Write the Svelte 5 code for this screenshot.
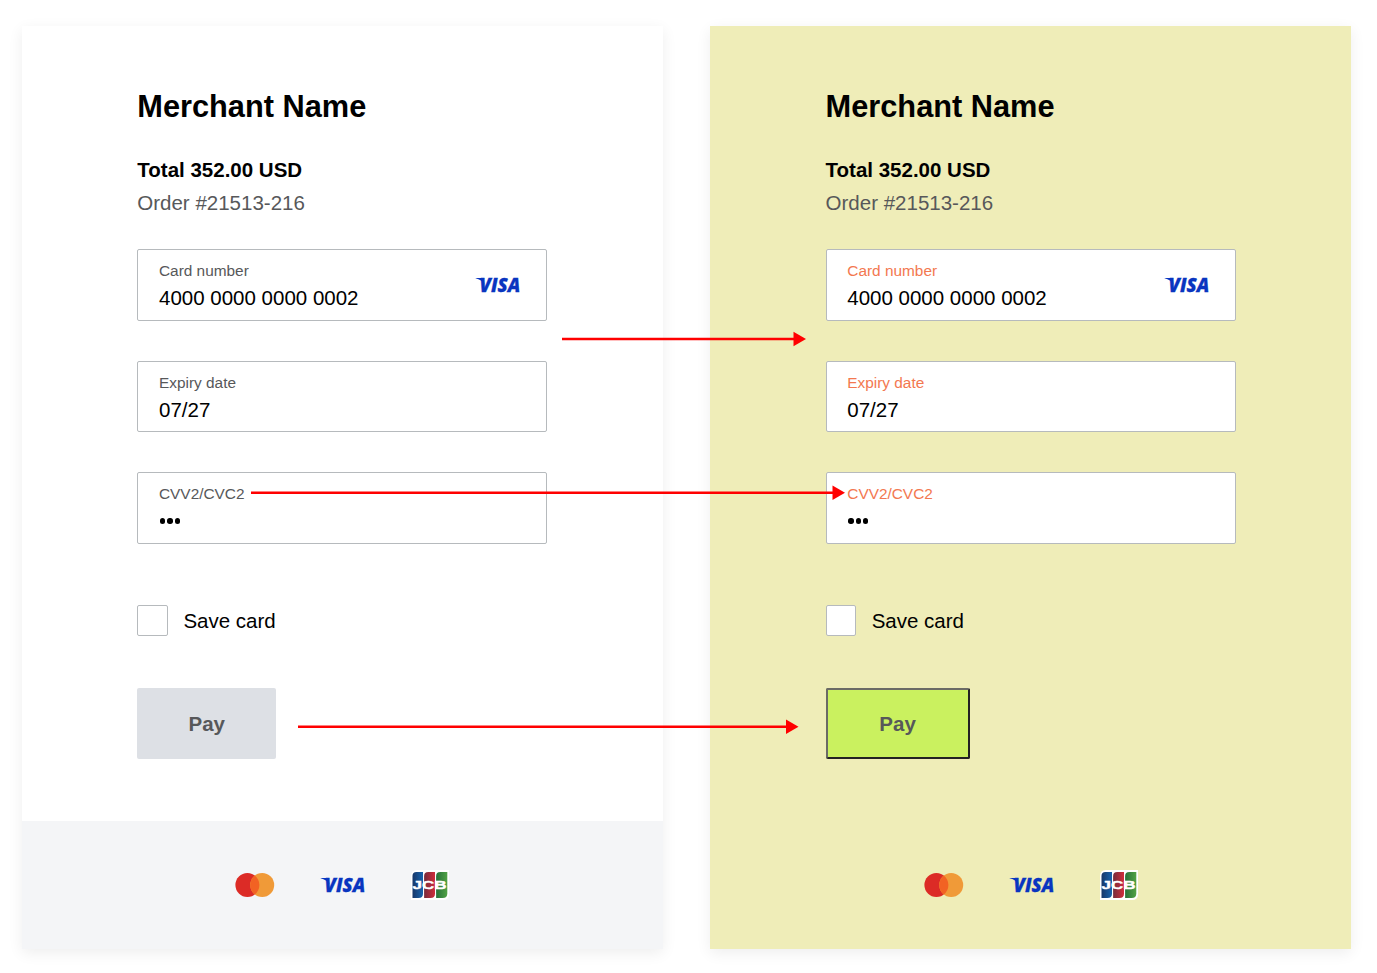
<script>
  const panels = [
    { id: 'standard', themed: false },
    { id: 'custom', themed: true }
  ];
  const fields = [
    { label: 'Card number', value: '4000 0000 0000 0002', brand: true },
    { label: 'Expiry date', value: '07/27' },
    { label: 'CVV2/CVC2', secret: true }
  ];
  const arrows = [
    { x1: 562, x2: 806, y: 339 },
    { x1: 251, x2: 845, y: 492.8 },
    { x1: 298, x2: 798.5, y: 726.8 }
  ];
</script>

{#snippet visa()}
  <svg class="visa" width="46" height="18" viewBox="0 0 46 18" aria-label="Visa">
    <path d="M0.6 1.9H6.4Q8.2 1.9 8.6 3.5L9.4 8Q6.8 3.8 0.6 2.3Z" fill="#0935c0" />
    <text x="4.6" y="16" textLength="40.6" lengthAdjust="spacingAndGlyphs">VISA</text>
  </svg>
{/snippet}

<main>
  {#each panels as panel (panel.id)}
    <section class="panel" class:themed={panel.themed}>
      <div class="content">
        <h1>Merchant Name</h1>
        <p class="total">Total 352.00 USD</p>
        <p class="order">Order #21513-216</p>
        <div class="fields">
          {#each fields as field}
            <div class="field">
              <div>
                <div class="label">{field.label}</div>
                {#if field.secret}
                  <div class="dots"><i></i><i></i><i></i></div>
                {:else}
                  <div class="value">{field.value}</div>
                {/if}
              </div>
              {#if field.brand}{@render visa()}{/if}
            </div>
          {/each}
        </div>
        <div class="save"><span class="box"></span><span>Save card</span></div>
        <button>Pay</button>
      </div>
      <footer>
        <svg width="40" height="26" viewBox="0 0 40 26" aria-label="Mastercard">
          <circle cx="12.4" cy="13" r="12" fill="#dc2b26" />
          <circle cx="27.2" cy="13" r="12" fill="#f09a38" />
          <path d="M19.8 3.55a12 12 0 0 1 0 18.9a12 12 0 0 1 0-18.9Z" fill="#f26223" />
        </svg>
        {@render visa()}
        <svg class="jcb" width="38" height="30" viewBox="0 0 38 30" aria-label="JCB">
          <defs>
            <linearGradient id="blue-{panel.id}"><stop stop-color="#173769" /><stop offset="1" stop-color="#1763ad" /></linearGradient>
            <linearGradient id="red-{panel.id}"><stop stop-color="#752c3c" /><stop offset="1" stop-color="#d12d3b" /></linearGradient>
            <linearGradient id="green-{panel.id}"><stop stop-color="#28713a" /><stop offset="1" stop-color="#51a345" /></linearGradient>
          </defs>
          <path d="M6 0H38V24Q38 30 32 30H0V6Q0 0 6 0Z" fill="#fff" />
          <path d="M5.5 2H12V23.5Q12 28 7.5 28H1.5V6Q1.5 2 5.5 2Z" fill="url(#blue-{panel.id})" />
          <path d="M17.3 2H24V23.5Q24 28 19.5 28H13.1V6Q13.1 2 17.3 2Z" fill="url(#red-{panel.id})" />
          <path d="M29.3 2H36.3V23.5Q36.3 28 31.7 28H25.1V6Q25.1 2 29.3 2Z" fill="url(#green-{panel.id})" />
          <text x="1.6" y="19.2" textLength="34" lengthAdjust="spacingAndGlyphs">JCB</text>
        </svg>
      </footer>
    </section>
  {/each}
  <svg class="arrows" width="1377" height="973" aria-hidden="true">
    {#each arrows as a}
      <path d="M{a.x1} {a.y}H{a.x2 - 11}" stroke="#f00" stroke-width="2.5" />
      <path d="M{a.x2} {a.y}l-12.5-7.2v14.4z" fill="#f00" />
    {/each}
  </svg>
</main>

<style>
  :global(body) {
    background: #fff;
  }
  main {
    position: relative;
    box-sizing: border-box;
    width: 1377px;
    height: 973px;
    padding: 26px 26px 24px 22px;
    display: flex;
    gap: 47.6px;
    overflow: hidden;
    font-family: 'Liberation Sans', Arial, sans-serif;
    font-size: 20.5px;
    color: #000;
  }
  .panel {
    width: 640.7px;
    height: 923px;
    display: flex;
    flex-direction: column;
    background: #fff;
    box-shadow: 0 4px 14px rgba(0, 0, 0, 0.07);
  }
  .themed {
    background: #efedb8;
  }
  .content {
    box-sizing: border-box;
    height: 795px;
    padding: 61px 115.3px 0;
  }
  h1 {
    margin: 0 0 26px;
    font-size: 30.75px;
    line-height: 40px;
  }
  p {
    margin: 0;
    line-height: 33px;
  }
  .total {
    font-weight: bold;
  }
  .order {
    color: #57585a;
  }
  .fields {
    margin-top: 30.4px;
    display: flex;
    flex-direction: column;
    gap: 40.2px;
  }
  .field {
    box-sizing: border-box;
    height: 71.3px;
    border: 1px solid #b6babd;
    border-radius: 2px;
    background: #fff;
    padding: 11.1px 25px 0 20.7px;
    display: flex;
    justify-content: space-between;
  }
  .field .visa {
    margin-top: 14.4px;
  }
  .label {
    font-size: 15.4px;
    line-height: 20px;
    color: #57585a;
  }
  .themed .label {
    color: #f37850;
  }
  .value {
    line-height: 34px;
  }
  .dots {
    display: flex;
    gap: 2px;
    padding: 13.8px 0 0 1.1px;
  }
  .dots i {
    width: 5.3px;
    height: 5.3px;
    border-radius: 50%;
    background: #000;
  }
  svg {
    overflow: visible;
  }
  .visa text {
    font-family: 'Open Sans', sans-serif;
    font-weight: 800;
    font-style: italic;
    font-size: 19.8px;
    fill: #0935c0;
    stroke: #0935c0;
    stroke-width: 0.3px;
  }
  .save {
    margin-top: 61.7px;
    display: flex;
    align-items: center;
    gap: 15.4px;
    height: 31px;
  }
  .box {
    box-sizing: border-box;
    width: 30.7px;
    height: 31px;
    border: 1px solid #b6babd;
    border-radius: 2px;
    background: #fff;
  }
  button {
    display: block;
    box-sizing: border-box;
    margin-top: 51.5px;
    width: 139px;
    height: 71.5px;
    padding: 0;
    border: 0;
    border-radius: 2px;
    background: #dde0e5;
    color: #57585a;
    font: bold 20.5px 'Liberation Sans', Arial, sans-serif;
  }
  .themed button {
    width: 144px;
    border: 2.6px solid;
    border-color: #6b6b65 #222 #222 #6b6b65;
    background: #caf15f;
  }
  footer {
    flex: 1;
    display: flex;
    align-items: center;
    justify-content: center;
    gap: 45px;
    background: #f4f5f7;
  }
  .themed footer {
    background: none;
  }
  .jcb text {
    font-family: 'Liberation Sans', Arial, sans-serif;
    font-weight: bold;
    font-size: 11.8px;
    fill: #fff;
    stroke: #fff;
    stroke-width: 0.4px;
  }
  .arrows {
    position: absolute;
    inset: 0;
    pointer-events: none;
  }
</style>
